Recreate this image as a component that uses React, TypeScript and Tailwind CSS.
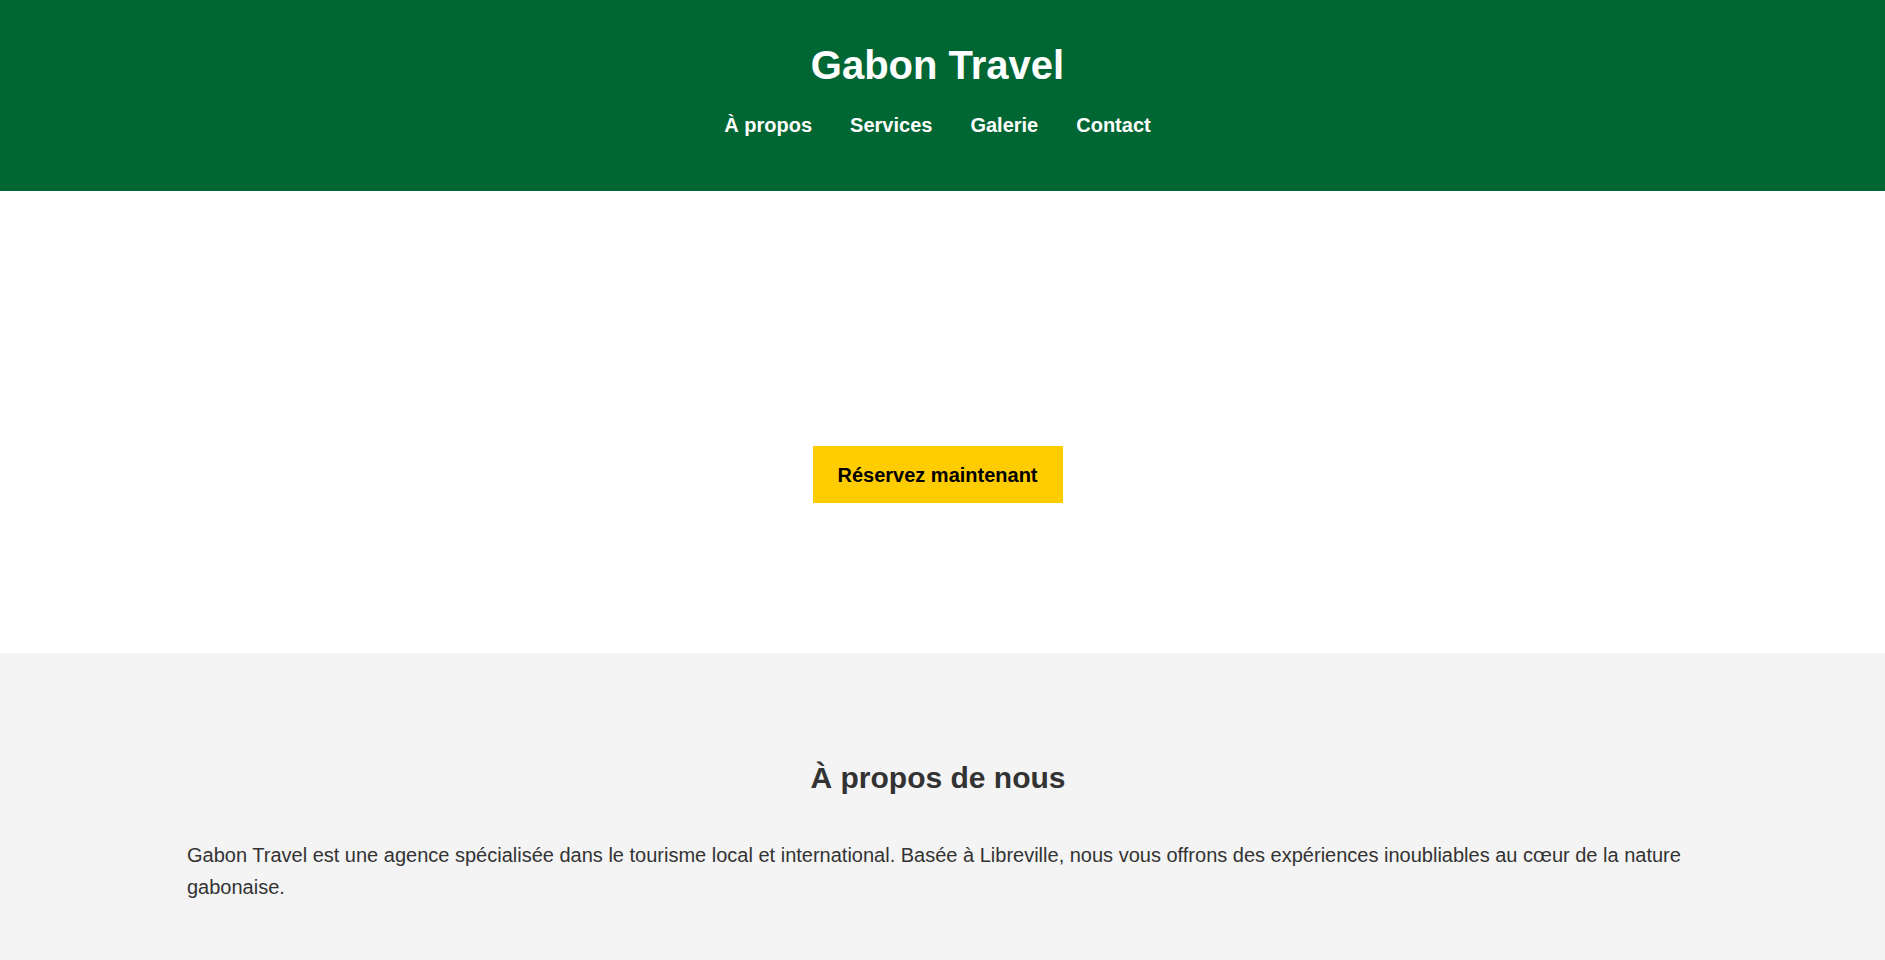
const navLinks = ['À propos', 'Services', 'Galerie', 'Contact']

export default function App() {
    return (
        <div className="font-['Liberation_Sans',Arial,sans-serif] text-[#333333]">
            {/* Header */}
            <header className="h-[191px] bg-[#006633] pr-[10px] pt-[42px] text-center text-white">
                <h1 className="text-[40px] font-bold leading-[46px]">Gabon Travel</h1>
                <nav className="mt-[26px] flex justify-center gap-[38px] text-[20px] font-bold leading-[23px]">
                    {navLinks.map((link) => (
                        <a key={link} href="#" className="text-white">
                            {link}
                        </a>
                    ))}
                </nav>
            </header>

            {/* Hero */}
            <section className="flex h-[462px] justify-center bg-white pr-[10px] pt-[255px]">
                <a
                    href="#"
                    className="flex h-[57px] w-[250px] items-center justify-center bg-[#ffcc00] text-[20px] font-bold text-black"
                >
                    Réservez maintenant
                </a>
            </section>

            {/* About */}
            <section className="bg-[#f4f4f4] pb-[80px] pl-[187px] pr-[196px] pt-[108px]">
                <h2 className="mb-[44px] text-center text-[30px] font-bold leading-[34px] text-[#333333]">
                    À propos de nous
                </h2>
                <p className="text-[20px] leading-[32px] text-[#333333]">
                    Gabon Travel est une agence spécialisée dans le tourisme local et international. Basée à
                    Libreville, nous vous offrons des expériences inoubliables au cœur de la nature gabonaise.
                </p>
            </section>
        </div>
    )
}
